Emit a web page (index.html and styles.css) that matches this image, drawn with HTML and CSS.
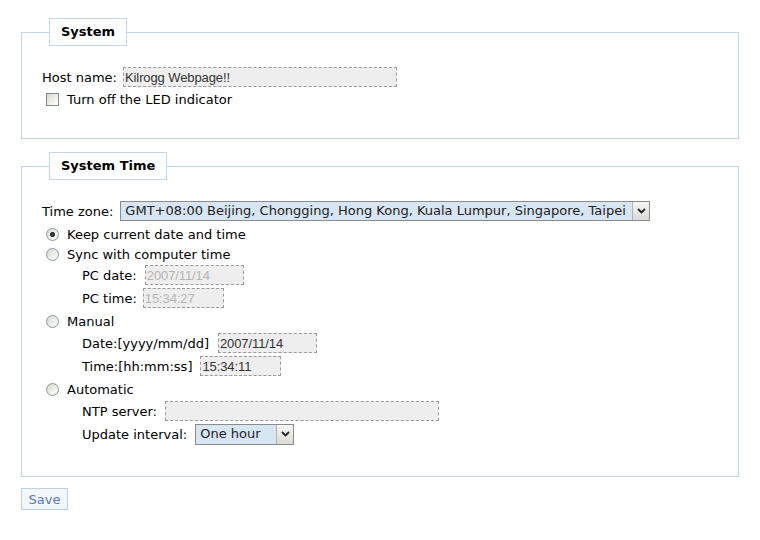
FILE: index.html
```html
<!DOCTYPE html>
<html>
<head>
<meta charset="utf-8">
<title>System</title>
<link rel="stylesheet" href="styles.css">
</head>
<body>
<div class="page">
  <fieldset class="box box-system">
    <legend>System</legend>
    <div class="row">
      <label class="lbl" for="host">Host name:</label>
      <input id="host" class="txt w-long" type="text" value="Kilrogg Webpage!!">
    </div>
    <div class="row">
      <input id="led" class="chk" type="checkbox">
      <label class="opt" for="led">Turn off the LED indicator</label>
    </div>
  </fieldset>

  <fieldset class="box box-time">
    <legend>System Time</legend>
    <div class="row">
      <span class="lbl lbl-tz">Time zone:</span>
      <div class="select sel-tz">
        <span class="sel-val">GMT+08:00 Beijing, Chongging, Hong Kong, Kuala Lumpur, Singapore, Taipei</span>
        <span class="sel-arrow"><svg width="9" height="6" viewBox="0 0 9 6"><path d="M1 1 L4.5 4.5 L8 1" fill="none" stroke="#222" stroke-width="1.8"/></svg></span>
      </div>
    </div>
    <div class="row r-keep">
      <input id="r1" class="rad" type="radio" name="mode" checked>
      <label class="opt" for="r1">Keep current date and time</label>
    </div>
    <div class="row r19">
      <input id="r2" class="rad" type="radio" name="mode">
      <label class="opt" for="r2">Sync with computer time</label>
    </div>
    <div class="row sub">
      <span class="lbl">PC date:</span>
      <input class="txt w-date dis" type="text" value="2007/11/14" disabled>
    </div>
    <div class="row sub r24">
      <span class="lbl lbl-tight">PC time:</span>
      <input class="txt w-time dis" type="text" value="15:34:27" disabled>
    </div>
    <div class="row">
      <input id="r3" class="rad" type="radio" name="mode">
      <label class="opt" for="r3">Manual</label>
    </div>
    <div class="row sub">
      <span class="lbl lbl-wide">Date:[yyyy/mm/dd]</span>
      <input class="txt w-date" type="text" value="2007/11/14">
    </div>
    <div class="row sub r24">
      <span class="lbl lbl-mid">Time:[hh:mm:ss]</span>
      <input class="txt w-time" type="text" value="15:34:11">
    </div>
    <div class="row">
      <input id="r4" class="rad" type="radio" name="mode">
      <label class="opt" for="r4">Automatic</label>
    </div>
    <div class="row sub">
      <span class="lbl">NTP server:</span>
      <input class="txt w-long" type="text" value="">
    </div>
    <div class="row sub r24">
      <span class="lbl">Update interval:</span>
      <div class="select sel-int">
        <span class="sel-val">One hour</span>
        <span class="sel-arrow"><svg width="9" height="6" viewBox="0 0 9 6"><path d="M1 1 L4.5 4.5 L8 1" fill="none" stroke="#222" stroke-width="1.8"/></svg></span>
      </div>
    </div>
  </fieldset>

  <button class="save" type="button">Save</button>
</div>
</body>
</html>
```

FILE: styles.css
```css
html, body {
  margin: 0;
  padding: 0;
  background: #ffffff;
}
body {
  font-family: "DejaVu Sans", Verdana, sans-serif;
  font-size: 13px;
  color: #000;
}
.page {
  padding: 0 21px;
}
.box {
  margin: 18px 0 0;
  padding: 20px 20px 28px 20px;
  border: 1px solid #c3d5e7;
  min-width: 0;
}
.box-time {
  margin-top: 13px;
  padding-bottom: 30px;
}
.box legend {
  margin-left: 7px;
  padding: 6px 11px;
  border: 1px solid #c3d5e7;
  background: #fff;
  font-weight: bold;
  font-size: 13px;
  line-height: 14px;
  color: #000;
}
.row {
  display: flex;
  align-items: center;
  height: 22px;
}
.r19 { height: 19px; }
.r24 { height: 24px; }
.r-keep { height: 23px; padding-top: 1px; box-sizing: border-box; }
.sub {
  padding-left: 40px;
}
.lbl {
  margin-right: 6px;
  white-space: nowrap;
}
.lbl-tz { margin-right: 7px; }
.sub .lbl { margin-right: 8px; }
.sub .lbl-tight { margin-right: 6px; }
.sub .lbl-wide { margin-right: 9px; }
.sub .lbl-mid { margin-right: 8px; }
.opt {
  white-space: nowrap;
}
.txt {
  box-sizing: border-box;
  height: 20px;
  margin: 0;
  padding: 0 1px;
  border: 1px dashed #9a9a9a;
  background: #eeeeee;
  font-family: "Liberation Sans", Arial, sans-serif;
  font-size: 13px;
  letter-spacing: -0.1px;
  color: #333;
  outline: none;
}
.txt.dis {
  color: #b4b4b4;
}
.w-long { width: 274px; }
.w-date { width: 99px; }
.w-time { width: 81px; }

.chk, .rad {
  -webkit-appearance: none;
  appearance: none;
  box-sizing: border-box;
  width: 13px;
  height: 13px;
  margin: 0 8px 0 4px;
  border: 1px solid #7f8a93;
  background: linear-gradient(135deg, #d6d6d0 0%, #f0f0ec 60%, #ffffff 100%);
  flex: none;
}
.rad {
  border-radius: 50%;
  border-color: #8a96a0;
}
.rad:checked {
  background:
    radial-gradient(circle at 50% 50%, #3a3a3a 0, #3a3a3a 2.2px, rgba(58,58,58,0) 3px),
    linear-gradient(135deg, #d6d6d0 0%, #f0f0ec 60%, #ffffff 100%);
}

.select {
  box-sizing: border-box;
  display: flex;
  align-items: stretch;
  height: 20px;
  border: 1px solid #8c8c8c;
  background: #d8e5f2;
  color: #222;
}
.sel-tz { width: 530px; }
.sel-int { width: 99px; height: 21px; }
.sel-val {
  flex: 1;
  padding-left: 4px;
  line-height: 18px;
  white-space: nowrap;
  overflow: hidden;
}
.sel-arrow {
  box-sizing: border-box;
  width: 17px;
  border-left: 1px solid #b2b2b2;
  background: linear-gradient(#f6f6f4, #d9d9d6);
  display: flex;
  align-items: center;
  justify-content: center;
}
.save {
  display: block;
  margin: 11px 0 0;
  box-sizing: border-box;
  width: 47px;
  height: 22px;
  padding: 0;
  border: 1px solid #bcd1e6;
  background: #f3f7fc;
  color: #5a78b4;
  font-family: "DejaVu Sans", Verdana, sans-serif;
  font-size: 13px;
}
```
